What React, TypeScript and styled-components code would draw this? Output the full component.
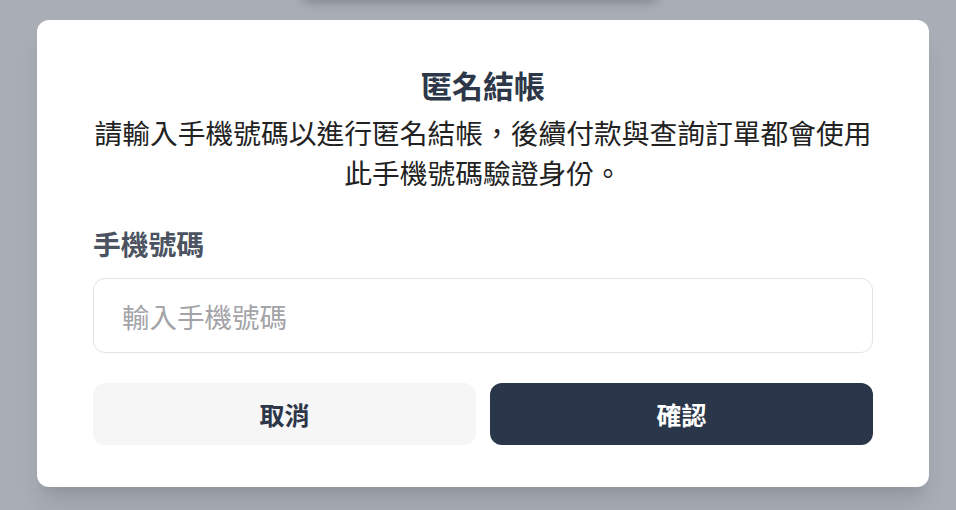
import styled, { createGlobalStyle } from 'styled-components';

const GlobalStyle = createGlobalStyle`
  html, body {
    margin: 0;
    padding: 0;
    background: #a9adb6;
    font-family: "Noto Sans CJK TC", "Noto Sans", sans-serif;
  }
`;

const Overlay = styled.div`
  position: relative;
  width: 956px;
  height: 510px;
  overflow: hidden;
  background: #a9adb6;
  box-sizing: border-box;
  padding: 20px 27px 0 37px;
`;

// some element sitting above the viewport, only its shadow shows
const TopShade = styled.div`
  position: absolute;
  top: -60px;
  left: 300px;
  width: 360px;
  height: 60px;
  border-radius: 12px;
  background: #a9adb6;
  box-shadow: 0 3px 10px rgba(40, 44, 52, 0.28);
`;

const Modal = styled.div`
  width: 892px;
  height: 467px;
  box-sizing: border-box;
  background: #ffffff;
  border-radius: 12px;
  padding: 43px 56px 42px;
  display: flex;
  flex-direction: column;
  box-shadow: 0 20px 25px -5px rgba(0, 0, 0, 0.1), 0 10px 10px -5px rgba(0, 0, 0, 0.05);
`;

const Title = styled.h2`
  margin: 0;
  text-align: center;
  font-size: 31px;
  line-height: 44px;
  font-weight: 700;
  color: #2d3748;
`;

const Desc = styled.p`
  margin: 5px 0 0;
  text-align: center;
  font-size: 27.75px;
  line-height: 40px;
  color: #222222;
`;

const Label = styled.label`
  display: block;
  margin-top: 32.5px;
  font-size: 27.75px;
  line-height: 36px;
  font-weight: 700;
  color: #4b5260;
`;

const Input = styled.input`
  margin-top: 17.5px;
  height: 75px;
  width: 100%;
  box-sizing: border-box;
  border: 1.5px solid #e3e3e5;
  border-radius: 12px;
  padding: 0 28px;
  font-family: inherit;
  font-size: 27.5px;
  color: #222;
  outline: none;
  &::placeholder {
    color: #a3a3a8;
  }
`;

const Actions = styled.div`
  margin-top: 30px;
  display: grid;
  grid-template-columns: 1fr 1fr;
  gap: 14px;
`;

const Button = styled.button<{ $primary?: boolean }>`
  height: 62px;
  border: none;
  border-radius: 12px;
  font-family: inherit;
  font-size: 25px;
  font-weight: 700;
  cursor: pointer;
  background: ${(p) => (p.$primary ? '#2a3649' : '#f6f6f7')};
  color: ${(p) => (p.$primary ? '#ffffff' : '#2d3748')};
`;

export default function App() {
  return (
    <>
      <GlobalStyle />
      <Overlay>
        <TopShade />
        <Modal>
          <Title>匿名結帳</Title>
          <Desc>
            請輸入手機號碼以進行匿名結帳，後續付款與查詢訂單都會使用
            <br />
            此手機號碼驗證身份。
          </Desc>
          <Label htmlFor="phone">手機號碼</Label>
          <Input id="phone" placeholder="輸入手機號碼" />
          <Actions>
            <Button>取消</Button>
            <Button $primary>確認</Button>
          </Actions>
        </Modal>
      </Overlay>
    </>
  );
}
